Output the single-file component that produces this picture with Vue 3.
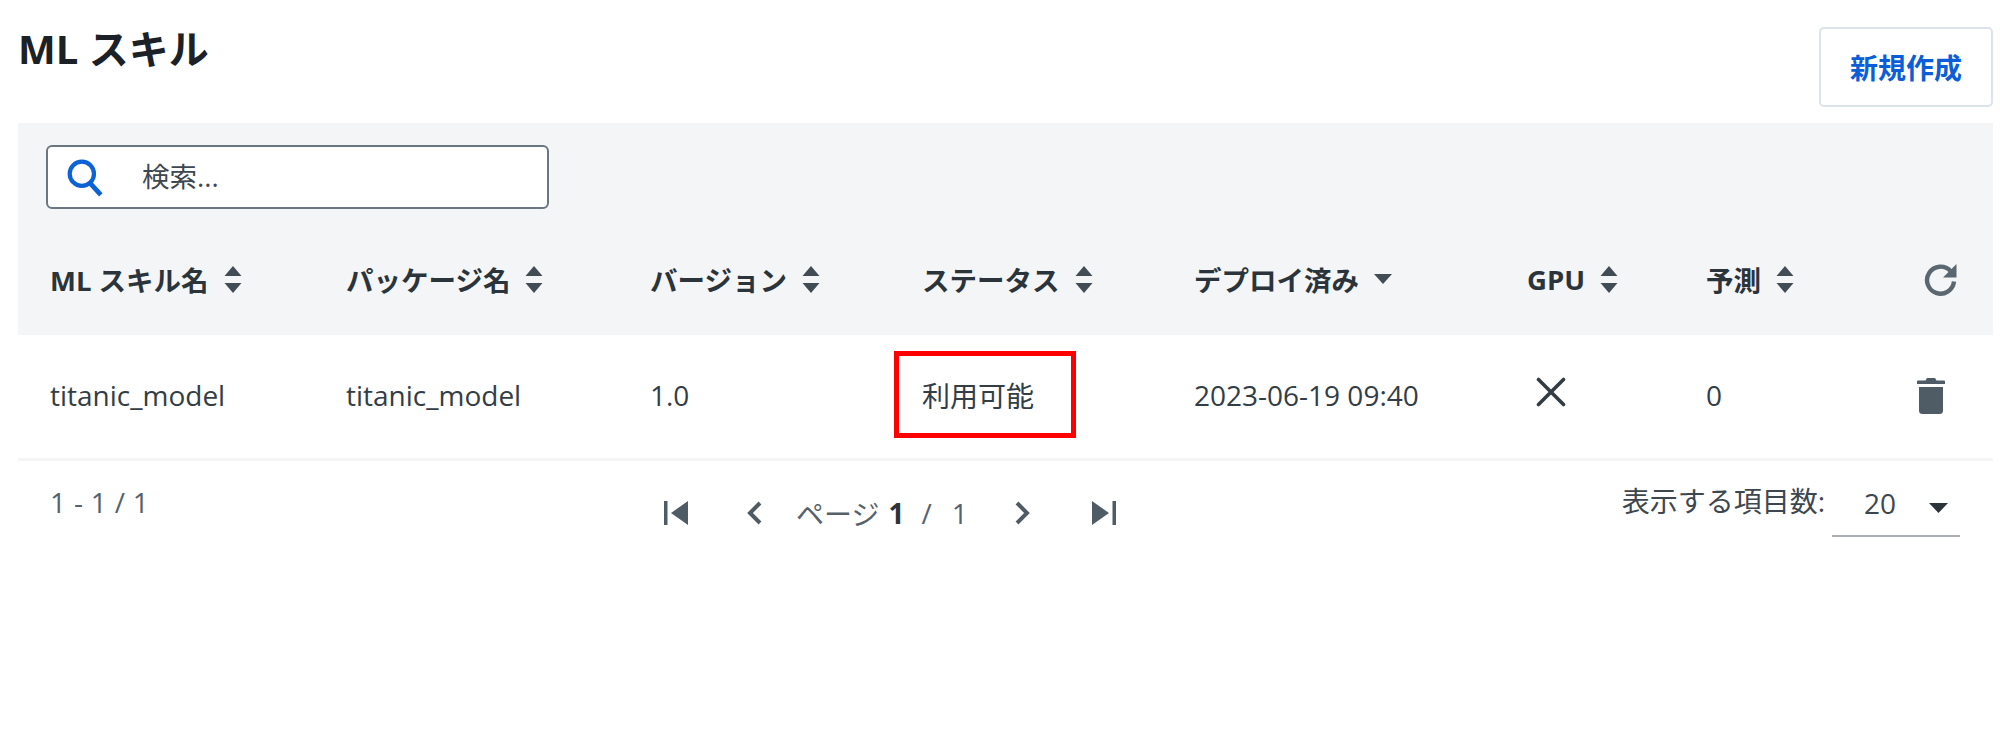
<script setup>
const columns = [
  { label: 'ML スキル名', value: 'titanic_model' },
  { label: 'パッケージ名', value: 'titanic_model' },
  { label: 'バージョン', value: '1.0' },
  { label: 'ステータス', value: '利用可能', marked: true },
  { label: 'デプロイ済み', value: '2023-06-19 09:40', sorted: true },
  { label: 'GPU', cross: true },
  { label: '予測', value: '0' }
]
</script>

<template>
  <div class="page">
    <header class="top">
      <h1 class="title">ML スキル</h1>
      <button class="create">新規作成</button>
    </header>

    <section class="band">
      <div class="search">
        <svg class="search-icon" width="36" height="38" viewBox="0 0 34 36" fill="none">
          <circle cx="14" cy="14" r="11.5" stroke="#0b63d6" stroke-width="4" />
          <path d="M22 23 L32 34" stroke="#0b63d6" stroke-width="4.5" />
        </svg>
        <span class="placeholder">検索...</span>
      </div>

      <div class="grid head">
        <div v-for="c in columns" :key="c.label" class="th">
          <span>{{ c.label }}</span>
          <svg v-if="c.sorted" class="caret" width="18" height="10" viewBox="0 0 18 10">
            <path d="M0 0 H18 L9 10 Z" fill="#414c55" />
          </svg>
          <svg v-else class="sort" width="18" height="27" viewBox="0 0 18 27">
            <path d="M9 0 L17.5 10 H0.5 Z M0.5 17 H17.5 L9 27 Z" fill="#414c55" />
          </svg>
        </div>
        <div class="action">
          <svg width="34" height="33" viewBox="0 0 34 33" fill="none">
            <path d="M26.5 8 A13.5 13.5 0 1 0 30 18.5" stroke="#5a6770" stroke-width="4.4" />
            <path d="M32.5 1 V14.5 H19 Z" fill="#5a6770" />
          </svg>
        </div>
      </div>
    </section>

    <div class="grid row">
      <div v-for="c in columns" :key="c.label" class="td" :class="{ marked: c.marked }">
        <svg v-if="c.cross" class="cross" width="30" height="30" viewBox="0 0 30 30" fill="none">
          <path d="M2.5 2.5 L27.5 27.5 M27.5 2.5 L2.5 27.5" stroke="#333c42" stroke-width="3.6" stroke-linecap="round" />
        </svg>
        <span v-else>{{ c.value }}</span>
        <div v-if="c.marked" class="highlight"></div>
      </div>
      <div class="action trash">
        <svg width="28" height="36" viewBox="0 0 28 36">
          <path d="M10 0 H18 L19.500 2.500 H27 Q28 2.500 28 3.500 V6 H0 V3.500 Q0 2.500 1 2.500 H8.500 Z" fill="#4f5c65" />
          <path d="M2 9 H26 V32.500 Q26 36 22.500 36 H5.500 Q2 36 2 32.500 Z" fill="#4f5c65" />
        </svg>
      </div>
    </div>

    <footer class="foot">
      <div class="count">1 - 1 / 1</div>
      <nav class="pager">
        <svg class="first" width="24" height="24" viewBox="0 0 24 24"><path d="M0 0 H3.500 V24 H0 Z M24 0 V24 L7 12 Z" fill="#4f5c65" /></svg>
        <svg class="prev" width="16" height="24" viewBox="0 0 16 24" fill="none"><path d="M13 2 L3 12 L13 22" stroke="#4f5c65" stroke-width="4" /></svg>
        <span class="page-label">ページ</span>
        <b class="page-current">1</b>
        <span class="page-sep">/</span>
        <span class="page-total">1</span>
        <svg class="next" width="16" height="24" viewBox="0 0 16 24" fill="none"><path d="M3 2 L13 12 L3 22" stroke="#4f5c65" stroke-width="4" /></svg>
        <svg class="last" width="24" height="24" viewBox="0 0 24 24"><path d="M24 0 H20.500 V24 H24 Z M0 0 V24 L17 12 Z" fill="#4f5c65" /></svg>
      </nav>
      <div class="size">
        <span class="size-label">表示する項目数:</span>
        <div class="select">
          <span class="select-value">20</span>
          <svg class="select-caret" width="19" height="10" viewBox="0 0 19 10"><path d="M0 0 H19 L9.500 10 Z" fill="#2b343a" /></svg>
        </div>
      </div>
    </footer>
  </div>
</template>

<style>
html, body { margin: 0; background: #fff; }
</style>

<style scoped>
.page {
  box-sizing: border-box;
  width: 2000px;
  height: 739px;
  padding: 0 7px 0 18px;
  font-family: "Open Sans", "Noto Sans CJK JP", sans-serif;
  font-size: 28px;
  color: #333d45;
  overflow: hidden;
}
.top {
  display: flex;
  justify-content: space-between;
  align-items: flex-start;
  height: 123px;
}
.title {
  margin: 25px 0 0 0;
  font-size: 40px;
  line-height: 48px;
  font-weight: 700;
  color: #1b2126;
}
.create {
  box-sizing: border-box;
  width: 174px;
  height: 80px;
  margin-top: 27px;
  padding: 0;
  border: 2px solid #dde3ea;
  border-radius: 5px;
  background: #fff;
  font: inherit;
  font-weight: 700;
  color: #0b5ed7;
}
.band {
  height: 212px;
  padding-top: 22px;
  box-sizing: border-box;
  background: #f4f5f7;
}
.search {
  box-sizing: border-box;
  display: flex;
  align-items: center;
  width: 503px;
  height: 64px;
  margin-left: 28px;
  padding-left: 19px;
  border: 2px solid #6b7780;
  border-radius: 6px;
  background: #fff;
}
.search-icon { flex: none; margin-top: 2px; }
.placeholder {
  margin-left: 39px;
  margin-bottom: 4px;
  font-size: 27.500px;
  color: #3d474f;
}
.grid {
  display: grid;
  grid-template-columns: 296px 304px 272px 272px 333px 179px 1fr 69px;
  padding-left: 32px;
  align-items: center;
}
.head {
  margin-top: 26px;
  height: 88px;
  font-weight: 700;
  color: #2b343a;
  font-size: 27.500px;
}
.th {
  display: flex;
  align-items: center;
  gap: 15px;
}
.action {
  display: flex;
  justify-content: flex-start;
}
.row {
  box-sizing: border-box;
  height: 126px;
  padding-bottom: 3px;
  border-bottom: 3px solid #f5f5f6;
}
.td {
  position: relative;
  display: flex;
  align-items: center;
}
.cross { margin: -6px 0 0 9px; }
.trash { margin-left: -7px; margin-top: 2px; }
.highlight {
  position: absolute;
  left: -28px;
  top: -24px;
  width: 182px;
  height: 87px;
  box-sizing: border-box;
  border: 5px solid #f00;
}
.foot {
  display: flex;
  align-items: flex-start;
  padding: 0 33px 0 32px;
  font-size: 28px;
}
.count {
  width: 614px;
  margin-top: 22px;
  color: #56626b;
  letter-spacing: 0.3px;
}
.pager {
  display: flex;
  align-items: center;
  height: 36px;
  margin-top: 34px;
  color: #56626b;
}
.prev { margin-left: 59px; }
.page-label { margin-left: 33px; }
.page-current { margin-left: 9px; color: #2b343a; }
.page-sep { margin-left: 17px; }
.page-total { margin-left: 20px; }
.next { margin-left: 46px; }
.last { margin-left: 62px; }
.size {
  display: flex;
  align-items: flex-start;
  margin-left: auto;
}
.size-label { margin-top: 19px; color: #3d474f; }
.select {
  box-sizing: border-box;
  display: flex;
  align-items: flex-start;
  width: 128px;
  height: 76px;
  margin-left: 7px;
  padding: 16px 0 0 32px;
  gap: 33px;
  border-bottom: 2px solid #aab0b5;
  color: #3d474f;
}
.select-value { line-height: 40px; margin-top: 6px; }
.select-caret { margin-top: 26px; }
</style>
